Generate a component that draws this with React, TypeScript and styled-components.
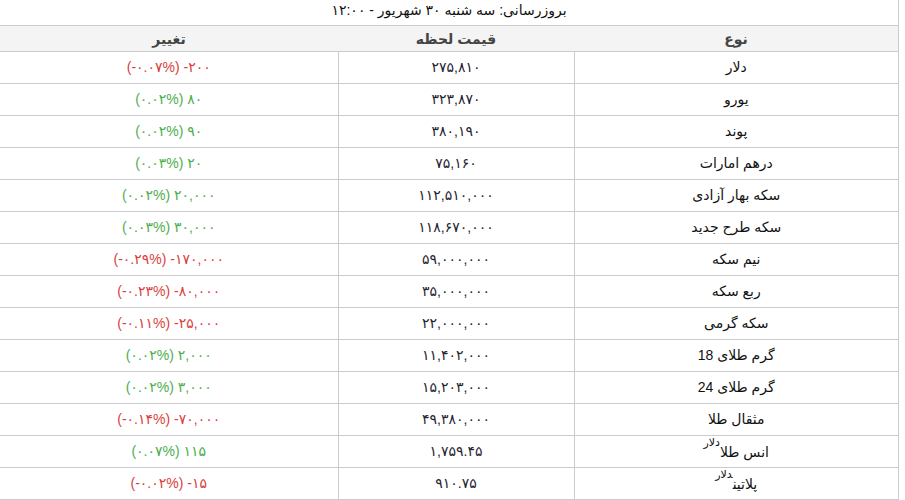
import styled, { createGlobalStyle } from "styled-components";

const GlobalStyle = createGlobalStyle`
  html, body {
    margin: 0;
    padding: 0;
    background: #fff;
  }
  body {
    font-family: "Liberation Sans", "DejaVu Sans", sans-serif;
    color: #111;
  }
`;

const Wrapper = styled.div`
  width: 898px;
  direction: rtl;
  border-right: 1px solid #ccc;
`;

const Caption = styled.div`
  height: 25px;
  line-height: 20px;
  text-align: center;
  font-size: 14px;
  color: #111;
`;

const Table = styled.table`
  width: 898px;
  border-collapse: collapse;
  table-layout: fixed;
`;

const HeadCell = styled.th<{ w: number }>`
  width: ${(p) => p.w}px;
  height: 25px;
  padding: 0;
  background: #f4f4f4;
  border-top: 1px solid #ccc;
  border-bottom: 1px solid #ccc;
  font-size: 14px;
  font-weight: bold;
  color: #444;
  text-align: center;
`;

const Row = styled.tr`
  height: 32px;
`;

const Cell = styled.td`
  padding: 0 0 2px;
  height: 29px;
  border-bottom: 1px solid #ccc;
  border-left: 1px solid #ccc;
  text-align: center;
  font-size: 14px;
  &:last-child {
    border-left: none;
  }
`;

const Price = styled.span`
  color: #1f2430;
  font-size: 14px;
`;

const Change = styled.span<{ up: boolean }>`
  direction: ltr;
  unicode-bidi: isolate;
  display: inline-block;
  font-size: 14px;
  color: ${(p) => (p.up ? "#4cae4c" : "#d9403c")};
`;

const Unit = styled.sup`
  font-size: 11px;
  vertical-align: 11px;
  line-height: 0;
`;

type Item = {
  name: string;
  unit?: string;
  price: string;
  change: string;
  percent: string;
  up: boolean;
};

const items: Item[] = [
  { name: "دلار", price: "۲۷۵,۸۱۰", change: "-۲۰۰", percent: "-۰.۰۷%", up: false },
  { name: "یورو", price: "۳۲۳,۸۷۰", change: "۸۰", percent: "۰.۰۲%", up: true },
  { name: "پوند", price: "۳۸۰,۱۹۰", change: "۹۰", percent: "۰.۰۲%", up: true },
  { name: "درهم امارات", price: "۷۵,۱۶۰", change: "۲۰", percent: "۰.۰۳%", up: true },
  { name: "سکه بهار آزادی", price: "۱۱۲,۵۱۰,۰۰۰", change: "۲۰,۰۰۰", percent: "۰.۰۲%", up: true },
  { name: "سکه طرح جدید", price: "۱۱۸,۶۷۰,۰۰۰", change: "۳۰,۰۰۰", percent: "۰.۰۳%", up: true },
  { name: "نیم سکه", price: "۵۹,۰۰۰,۰۰۰", change: "-۱۷۰,۰۰۰", percent: "-۰.۲۹%", up: false },
  { name: "ربع سکه", price: "۳۵,۰۰۰,۰۰۰", change: "-۸۰,۰۰۰", percent: "-۰.۲۳%", up: false },
  { name: "سکه گرمی", price: "۲۲,۰۰۰,۰۰۰", change: "-۲۵,۰۰۰", percent: "-۰.۱۱%", up: false },
  { name: "گرم طلای 18", price: "۱۱,۴۰۲,۰۰۰", change: "۲,۰۰۰", percent: "۰.۰۲%", up: true },
  { name: "گرم طلای 24", price: "۱۵,۲۰۳,۰۰۰", change: "۳,۰۰۰", percent: "۰.۰۲%", up: true },
  { name: "مثقال طلا", price: "۴۹,۳۸۰,۰۰۰", change: "-۷۰,۰۰۰", percent: "-۰.۱۴%", up: false },
  { name: "انس طلا", unit: "دلار", price: "۱,۷۵۹.۴۵", change: "۱۱۵", percent: "۰.۰۷%", up: true },
  { name: "پلاتین", unit: "دلار", price: "۹۱۰.۷۵", change: "-۱۵", percent: "-۰.۰۲%", up: false },
];

export default function App() {
  return (
    <>
      <GlobalStyle />
      <Wrapper>
        <Caption>بروزرسانی: سه شنبه ۳۰ شهریور - ۱۲:۰۰</Caption>
        <Table>
          <thead>
            <tr>
              <HeadCell w={324}>نوع</HeadCell>
              <HeadCell w={236}>قیمت لحظه</HeadCell>
              <HeadCell w={338}>تغییر</HeadCell>
            </tr>
          </thead>
          <tbody>
            {items.map((item) => (
              <Row key={item.name}>
                <Cell>
                  {item.name}
                  {item.unit && <Unit>{item.unit}</Unit>}
                </Cell>
                <Cell>
                  <Price>{item.price}</Price>
                </Cell>
                <Cell>
                  <Change up={item.up}>
                    ({item.percent}) {item.change}
                  </Change>
                </Cell>
              </Row>
            ))}
          </tbody>
        </Table>
      </Wrapper>
    </>
  );
}
